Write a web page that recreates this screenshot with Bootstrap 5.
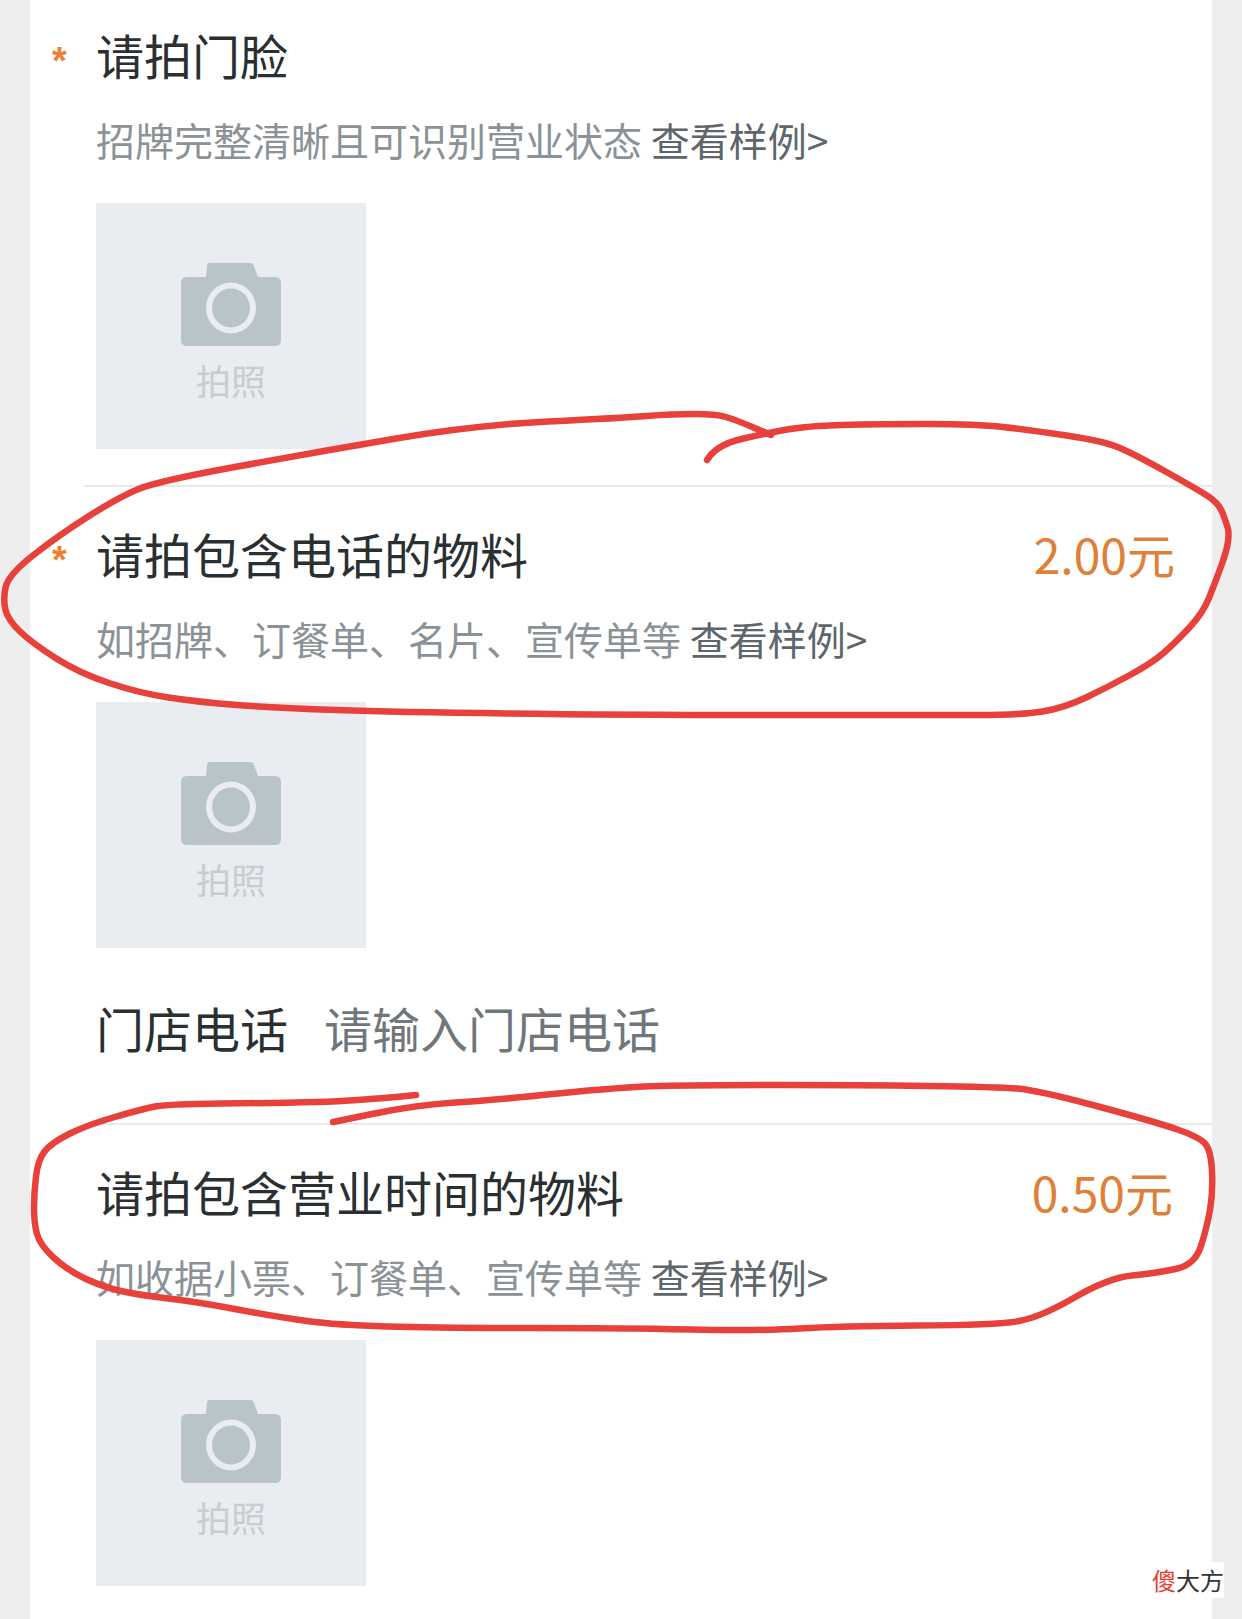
<!doctype html>
<html lang="zh">
<head>
<meta charset="utf-8">
<title>门店资料</title>
<link href="https://cdn.jsdelivr.net/npm/bootstrap@5.3.0/dist/css/bootstrap.min.css" rel="stylesheet">
<style>
html,body{height:1619px;overflow:hidden}
body{background:#eee;font-family:"Noto Sans CJK SC","Liberation Sans",sans-serif;position:relative}
.sheet{margin:0 30px;height:1619px;background:#fff;padding-top:22px}
.head-row{padding-left:22px;padding-right:37px;height:64px;line-height:64px;font-size:48px;color:#2a2f32}
.head-row.tight{padding-right:39px}
.req{width:44px;height:64px;flex:none;padding-top:7px;font:700 38px/64px "Liberation Sans",sans-serif;color:#ee8033}
.req-none{width:44px;flex:none}
.fee{color:#e08038;font-size:48px}
.hint{margin:29px 0 0 66px;height:48px;line-height:48px;font-size:39px;color:#8b9296;white-space:nowrap}
.hint a{color:#5d666b;text-decoration:none}
.shot{width:270px;height:246px;margin:40px 0 0 66px;background:#e9edf1;padding-top:60px}
.shot svg{display:block;width:100px;height:83px}
.shot span{font-size:35px;line-height:48px;color:#c6ccd0;margin-top:10px}
.rule{height:2px;margin:0 0 0 54px;background:#e9e9e9}
.gap-a{margin-top:36px}
.gap-b{margin-top:34px}
.phone{margin-top:47px;height:64px;line-height:64px;font-size:48px;padding-left:66px;color:#2a2f32}
.phone em{font-style:normal;color:#6f777b;margin-left:36px}
.gap-c{margin-top:64px}
.scrawl{position:absolute;left:0;top:0;width:1242px;height:1619px;pointer-events:none}
.scrawl path{fill:none;stroke:#e8403a;stroke-width:6.5;stroke-linecap:round;stroke-linejoin:round}
.mark-text{position:absolute;left:1152px;top:1562px;font-size:24px;line-height:36px;color:#333;background:#fff}
.mark-text b{font-weight:400;color:#e0402f}
</style>
</head>
<body>
<main class="sheet">
  <div class="head-row d-flex align-items-center"><span class="req">*</span><span>请拍门脸</span></div>
  <p class="hint mb-0">招牌完整清晰且可识别营业状态 <a href="#">查看样例&gt;</a></p>
  <div class="shot d-flex flex-column align-items-center">
    <svg viewBox="0 0 100 83"><path fill="#b9c4ca" d="M29 0h40q3 0 4 3l4 11h17q6 0 6 6v57q0 6-6 6H6q-6 0-6-6V20q0-6 6-6h19l1-11q0-3 3-3z"/><ellipse cx="50" cy="45" rx="25" ry="25.5" fill="#e9edf1"/><ellipse cx="50" cy="45" rx="19" ry="19.5" fill="#b9c4ca"/></svg>
    <span>拍照</span>
  </div>
  <div class="rule gap-a"></div>

  <div class="head-row d-flex align-items-center justify-content-between gap-b">
    <div class="d-flex"><span class="req">*</span><span>请拍包含电话的物料</span></div>
    <span class="fee">2.00元</span>
  </div>
  <p class="hint mb-0">如招牌、订餐单、名片、宣传单等 <a href="#">查看样例&gt;</a></p>
  <div class="shot d-flex flex-column align-items-center">
    <svg viewBox="0 0 100 83"><path fill="#b9c4ca" d="M29 0h40q3 0 4 3l4 11h17q6 0 6 6v57q0 6-6 6H6q-6 0-6-6V20q0-6 6-6h19l1-11q0-3 3-3z"/><ellipse cx="50" cy="45" rx="25" ry="25.5" fill="#e9edf1"/><ellipse cx="50" cy="45" rx="19" ry="19.5" fill="#b9c4ca"/></svg>
    <span>拍照</span>
  </div>

  <div class="phone">门店电话<em>请输入门店电话</em></div>
  <div class="rule gap-c"></div>

  <div class="head-row tight d-flex align-items-center justify-content-between gap-b">
    <div class="d-flex"><span class="req-none"></span><span>请拍包含营业时间的物料</span></div>
    <span class="fee">0.50元</span>
  </div>
  <p class="hint mb-0">如收据小票、订餐单、宣传单等 <a href="#">查看样例&gt;</a></p>
  <div class="shot d-flex flex-column align-items-center">
    <svg viewBox="0 0 100 83"><path fill="#b9c4ca" d="M29 0h40q3 0 4 3l4 11h17q6 0 6 6v57q0 6-6 6H6q-6 0-6-6V20q0-6 6-6h19l1-11q0-3 3-3z"/><ellipse cx="50" cy="45" rx="25" ry="25.5" fill="#e9edf1"/><ellipse cx="50" cy="45" rx="19" ry="19.5" fill="#b9c4ca"/></svg>
    <span>拍照</span>
  </div>
</main>

<svg class="scrawl" viewBox="0 0 1242 1619">
  <path data-pts="707,460 716,445 767,433 807,426 878,424 977,424 1029,430 1104,441 1136,455 1195,488 1219,503 1227,525 1229,533 1227,550 1215,583 1203,613 1175,643 1152,663 1108,687 1064,708 1021,715 938,715 621,715 396,712 277,708 198,702 139,693 79,673 32,643 8,620 3,600 8,575 59,535 119,497 158,481 317,452 475,425 621,418 672,414 716,414 736,420 771,435"/>
  <path data-pts="416,1095 356,1101 277,1103 166,1104 139,1110 87,1125 51,1143 38,1160 34,1193 34,1223 40,1245 67,1270 103,1287 139,1295 198,1302 277,1317 337,1325 436,1328 621,1328 760,1331 839,1326 997,1325 1041,1317 1108,1278 1156,1273 1195,1265 1207,1227 1213,1193 1211,1150 1199,1137 1156,1122 1037,1090 997,1087 859,1085 700,1085 621,1087 495,1100 416,1105 333,1122"/>
</svg>

<div class="mark-text"><b>傻</b>大方</div>

<script src="https://cdn.jsdelivr.net/npm/bootstrap@5.3.0/dist/js/bootstrap.bundle.min.js"></script>
<script>
document.querySelectorAll('.scrawl path').forEach(function(el){
  var p=el.dataset.pts.split(' ').map(function(s){return s.split(',').map(Number)});
  var d='M'+p[0].join(' ');
  for(var i=1;i<p.length-1;i++){
    d+=' Q'+p[i].join(' ')+' '+((p[i][0]+p[i+1][0])/2)+' '+((p[i][1]+p[i+1][1])/2);
  }
  d+=' L'+p[p.length-1].join(' ');
  el.setAttribute('d',d);
});
</script>
</body>
</html>
